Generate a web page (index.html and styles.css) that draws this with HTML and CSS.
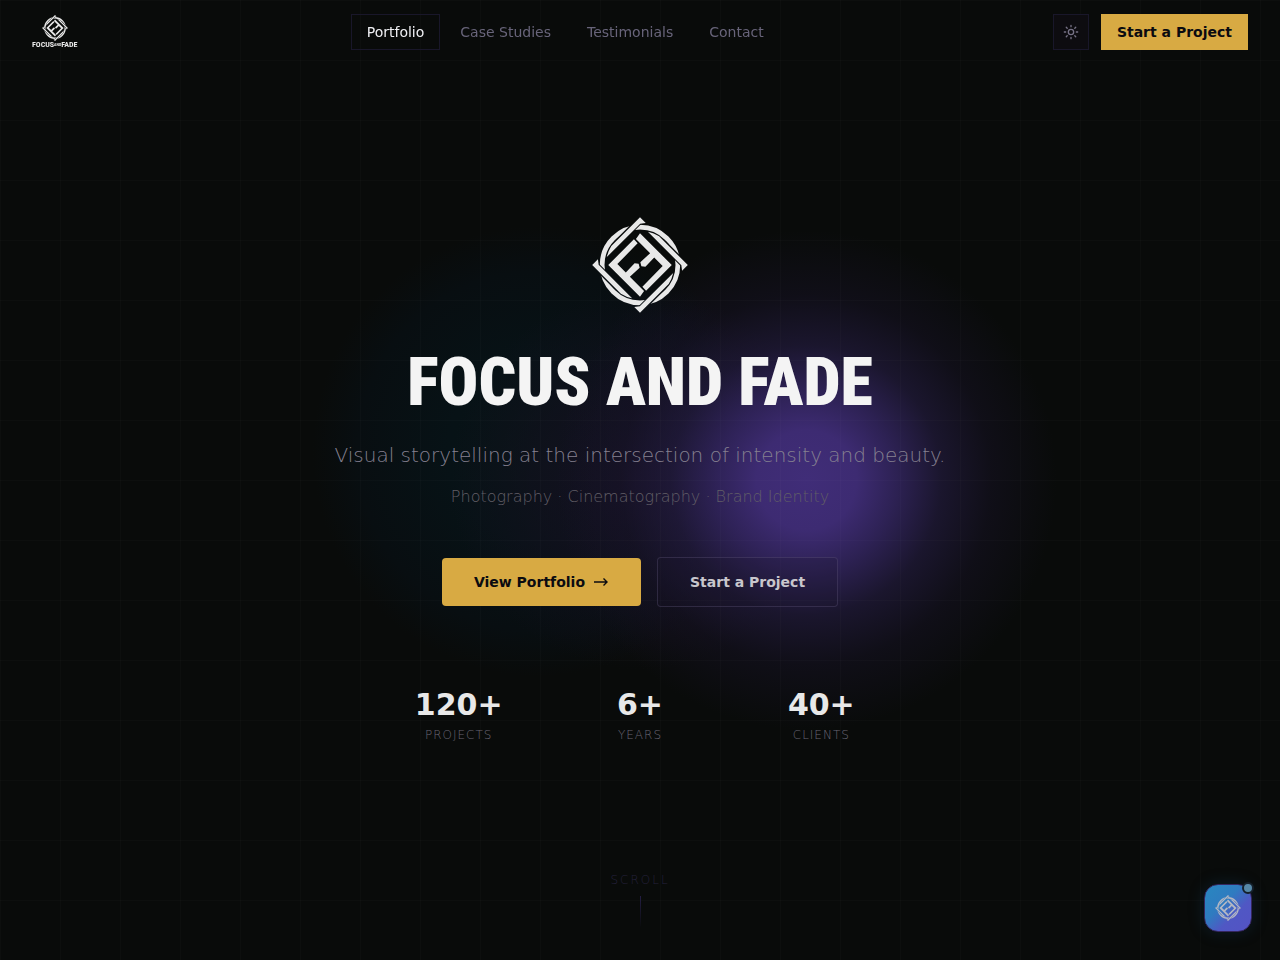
FILE: index.html
```
<!DOCTYPE html>
<html lang="en">
<head>
	<meta charset="utf-8">
	<meta name="viewport" content="width=device-width, initial-scale=1">
	<title>Focus and Fade</title>
	<link rel="stylesheet" href="styles.css">
</head>
<body>
	<svg class="sprite" aria-hidden="true">
		<defs>
			<path id="bar" d="M-20-100H100V-76L87-86H-53A102 102 0 0 1-20-100Z"/>
			<path id="half" d="M-94 0L-18-76L-7-64L-67-3L-42 22L-16-5L-4-4L-1 8L-30 35L12 77L0 94Z"/>
			<mask id="weave" maskUnits="userSpaceOnUse" x="-144" y="-144" width="288" height="288">
				<rect x="-144" y="-144" width="288" height="288" fill="#fff"/>
				<rect x="5" y="-104" width="104" height="21" transform="rotate(45)"/>
				<rect x="5" y="-104" width="104" height="21" transform="rotate(135)"/>
				<rect x="5" y="-104" width="104" height="21" transform="rotate(225)"/>
				<rect x="5" y="-104" width="104" height="21" transform="rotate(315)"/>
			</mask>
			<symbol id="mark" viewBox="-142 -142 284 284">
				<circle r="112" fill="none" stroke="currentColor" stroke-width="14" mask="url(#weave)"/>
				<g fill="currentColor">
					<use href="#bar" transform="rotate(45)"/>
					<use href="#bar" transform="rotate(135)"/>
					<use href="#bar" transform="rotate(225)"/>
					<use href="#bar" transform="rotate(315)"/>
					<use href="#half"/>
					<use href="#half" transform="rotate(180)"/>
				</g>
			</symbol>
		</defs>
	</svg>

	<header class="header">
		<a class="brand" href="#">
			<svg class="brand-mark" aria-hidden="true"><use href="#mark"/></svg>
			<span class="brand-name">FOCUS<small>AND</small>FADE</span>
		</a>
		<nav class="nav">
			<a class="nav-link active" href="#portfolio">Portfolio</a>
			<a class="nav-link" href="#cases">Case Studies</a>
			<a class="nav-link" href="#testimonials">Testimonials</a>
			<a class="nav-link" href="#contact">Contact</a>
		</nav>
		<div class="actions">
			<button class="theme" type="button" aria-label="Toggle theme">
				<svg width="16" height="16" viewBox="0 0 24 24" fill="none" stroke="currentColor" stroke-width="2" stroke-linecap="round">
					<circle cx="12" cy="12" r="4"/>
					<path d="M12 2v2M12 20v2M4.9 4.9l1.4 1.4M17.7 17.7l1.4 1.4M2 12h2M20 12h2M6.3 17.7l-1.4 1.4M19.1 4.9l-1.4 1.4"/>
				</svg>
			</button>
			<button class="start" type="button">Start a Project</button>
		</div>
	</header>

	<main class="hero">
		<svg class="hero-mark" aria-hidden="true"><use href="#mark"/></svg>
		<h1 class="title">FOCUS AND FADE</h1>
		<p class="tagline">Visual storytelling at the intersection of intensity and beauty.</p>
		<p class="services">Photography · Cinematography · Brand Identity</p>
		<div class="buttons">
			<button class="btn primary" type="button">View Portfolio
				<svg width="16" height="16" viewBox="0 0 16 16" fill="none" stroke="currentColor" stroke-width="1.4"><path d="M1 8h13M10.500 4.500L14 8l-3.500 3.500"/></svg>
			</button>
			<button class="btn ghost" type="button">Start a Project</button>
		</div>
		<dl class="stats">
			<div class="stat"><dd>120+</dd><dt>PROJECTS</dt></div>
			<div class="stat"><dd>6+</dd><dt>YEARS</dt></div>
			<div class="stat"><dd>40+</dd><dt>CLIENTS</dt></div>
		</dl>
		<div class="scroll">SCROLL</div>
	</main>

	<button class="chat" type="button" aria-label="Open chat">
		<svg class="chat-mark" aria-hidden="true"><use href="#mark"/></svg>
		<span class="chat-dot"></span>
	</button>
</body>
</html>
```

FILE: styles.css
```
* {
	box-sizing: border-box;
}
body {
	margin: 0;
	background: #090b0a;
	color: #e8e8e8;
	font-family: "DejaVu Sans", sans-serif;
	font-size: 14px;
}
button {
	font: inherit;
	cursor: pointer;
}
a {
	color: inherit;
	text-decoration: none;
}
.sprite {
	position: absolute;
	width: 0;
	height: 0;
}

/* header */
.header {
	position: fixed;
	top: 0;
	left: 0;
	right: 0;
	z-index: 2;
	height: 64px;
	padding: 0 32px;
	display: flex;
	align-items: center;
	justify-content: space-between;
}
.brand {
	display: flex;
	flex-direction: column;
	align-items: center;
}
.brand-mark {
	width: 26px;
	height: 26px;
}
.brand-name {
	display: flex;
	align-items: center;
	font: bold 8px/8px "Roboto Condensed", "Liberation Sans Narrow", "DejaVu Sans Condensed", sans-serif;
}
.brand-name small {
	font-size: 4px;
}
.nav {
	display: flex;
	gap: 4px;
}
.nav-link {
	padding: 0 15px;
	border: 1px solid transparent;
	line-height: 34px;
	color: #68647a;
}
.nav-link.active {
	color: #f0f0f4;
	border-color: #19172a;
}
.actions {
	display: flex;
	gap: 12px;
}
.theme {
	width: 36px;
	height: 36px;
	padding: 0;
	display: grid;
	place-items: center;
	color: #777286;
	background: #0d0c10;
	border: 1px solid #19172a;
}
.start {
	height: 36px;
	padding: 0 16px;
	border: 0;
	background: #d8aa43;
	color: #0b0b10;
	font-weight: bold;
}

/* hero */
.hero {
	position: relative;
	min-height: 100vh;
	display: flex;
	flex-direction: column;
	align-items: center;
	justify-content: center;
	text-align: center;
	background:
		linear-gradient(rgba(255, 255, 255, 0.014) 1px, transparent 1px) 0 0 / 60px 60px,
		linear-gradient(90deg, rgba(255, 255, 255, 0.014) 1px, transparent 1px) 0 0 / 60px 60px,
		radial-gradient(circle at 63% 50%, #402d78 0, #3d2b72 50px, rgba(54, 39, 102, 0.8) 90px, rgba(38, 29, 69, 0.6) 135px, rgba(26, 20, 44, 0.4) 185px, transparent 250px),
		radial-gradient(circle at 50% 50%, rgba(22, 17, 36, 0.9) 0, rgba(20, 16, 32, 0.6) 100px, transparent 190px),
		radial-gradient(circle at 42% 47%, #071415 0, #071216 90px, #080e11 180px, transparent 225px);
}
.hero-mark {
	width: 96px;
	height: 96px;
}
.title {
	margin: 34px 0 22px;
	font: 900 66px/72px "Roboto Condensed", "Liberation Sans Narrow", "DejaVu Sans Condensed", sans-serif;
	color: #f4f4f4;
}
.tagline {
	margin: 0;
	font-size: 20px;
	line-height: 28px;
	font-weight: 200;
	color: #858090;
}
.services {
	margin: 16px 0 0;
	font-size: 16px;
	line-height: 24px;
	font-weight: 200;
	color: #615e66;
}
.buttons {
	margin: 48px 0 0;
	display: flex;
	align-items: center;
	gap: 16px;
}
.btn {
	height: 48px;
	padding: 0 32px;
	display: flex;
	align-items: center;
	gap: 8px;
	border: 0;
	border-radius: 4px;
	font-weight: bold;
}
.primary {
	background: #d8aa43;
	color: #0b0b10;
}
.ghost {
	height: 50px;
	border: 1px solid rgba(110, 100, 140, 0.3);
	background: rgba(24, 20, 38, 0.2);
	color: #c8c6cc;
}
.stats {
	width: 100%;
	max-width: 512px;
	margin: 80px 0 0;
	display: grid;
	grid-template-columns: repeat(3, 1fr);
	gap: 32px;
}
.stat dd {
	margin: 0;
	font-size: 30px;
	line-height: 36px;
	font-weight: bold;
}
.stat dt {
	margin-top: 4px;
	font-size: 12px;
	line-height: 16px;
	font-weight: 200;
	letter-spacing: 1px;
	color: #686573;
}
.scroll {
	position: absolute;
	bottom: 32px;
	font-size: 12px;
	line-height: 16px;
	font-weight: 200;
	letter-spacing: 2px;
	color: #24213c;
}
.scroll::after {
	content: "";
	display: block;
	width: 1px;
	height: 32px;
	margin: 8px auto 0;
	background: linear-gradient(#241e45, transparent);
}

/* chat launcher */
.chat {
	position: fixed;
	right: 28px;
	bottom: 28px;
	width: 48px;
	height: 48px;
	padding: 0;
	display: grid;
	place-items: center;
	border: 1px solid #35265f;
	border-radius: 14px;
	background: linear-gradient(135deg, #2887c0 0, #2f7bc0 40%, #5057c4 65%, #5453c4 100%);
	box-shadow: 0 0 16px rgba(20, 70, 110, 0.3);
	color: #b4b8c4;
}
.chat-mark {
	width: 26px;
	height: 26px;
}
.chat-dot {
	position: absolute;
	top: -3px;
	right: -3px;
	width: 12px;
	height: 12px;
	border: 2px solid #15202b;
	border-radius: 50%;
	background: #5688a8;
}
```
